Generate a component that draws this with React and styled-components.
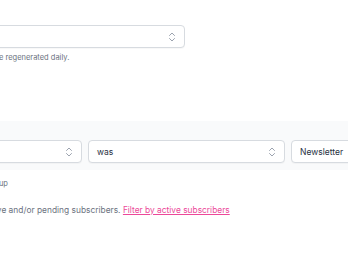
import React from "react";
import styled, { createGlobalStyle } from "styled-components";

const Global = createGlobalStyle`
  html, body { margin: 0; padding: 0; background: #ffffff; overflow: hidden; }
  body { font-family: Inter, "Noto Sans", sans-serif; -webkit-font-smoothing: antialiased; }
`;

const Page = styled.div`
  width: 348px;
  height: 268px;
  overflow: hidden;
`;

const Shift = styled.div`
  margin-left: -115px;
  padding-top: 25px;
`;

const Field = styled.div`
  width: ${(p) => p.$w}px;
  height: 23px;
  box-sizing: border-box;
  border: 1px solid #d7dbe0;
  border-radius: 4px;
  background: #ffffff;
  box-shadow: 0 1px 1px rgba(0, 0, 0, 0.03);
  display: flex;
  align-items: center;
  justify-content: space-between;
  padding: 0 8px 0 8px;
  flex: none;
  font-size: 8.5px;
  color: #27303f;
  white-space: nowrap;
`;

const Chevron = styled.svg`
  width: 8px;
  height: 10px;
  flex: none;
  color: #9ca3af;
`;

const Help = styled.p`
  margin: 4px 0 0;
  font-size: 7.5px;
  line-height: 12px;
  color: #6b7280;
  white-space: nowrap;
`;

const Band = styled.div`
  margin-top: 57px;
  background: #f9fafb;
  padding: 19px 0 7px;
  width: 700px;
`;

const Row = styled.div`
  display: flex;
  gap: 6px;
`;

const Note = styled.p`
  margin: ${(p) => p.$mt}px 0 0;
  font-size: ${(p) => p.$fs}px;
  line-height: ${(p) => p.$lh}px;
  color: #6b7280;
  white-space: nowrap;
`;

const Link = styled.a`
  color: #ec4899;
  text-decoration: underline;
  text-underline-offset: 1px;
`;

function Select({ w, value }) {
  return (
    <Field $w={w}>
      <span>{value}</span>
      <Chevron viewBox="0 0 8 10" fill="none" stroke="currentColor" strokeWidth="1" strokeLinecap="round" strokeLinejoin="round">
        <path d="M1.5 3.5 L4 1 L6.5 3.5" />
        <path d="M1.5 6.5 L4 9 L6.5 6.5" />
      </Chevron>
    </Field>
  );
}

export default function App() {
  return (
    <Page>
      <Global />
      <Shift>
        <Select w={300} value="" />
        <Help>Subscriber counts will need to be regenerated daily.</Help>
        <Band>
          <Row>
            <Select w={197} value="" />
            <Select w={197} value="was" />
            <Select w={197} value="Newsletter" />
          </Row>
        </Band>
        <Note $mt={8} $fs={7.5} $lh={12}>Subscribers that belong to a group</Note>
        <Note $mt={13} $fs={8.4} $lh={14}>
          This count includes all inactive and/or pending subscribers.{" "}
          <Link href="#">Filter by active subscribers</Link>
        </Note>
      </Shift>
    </Page>
  );
}
